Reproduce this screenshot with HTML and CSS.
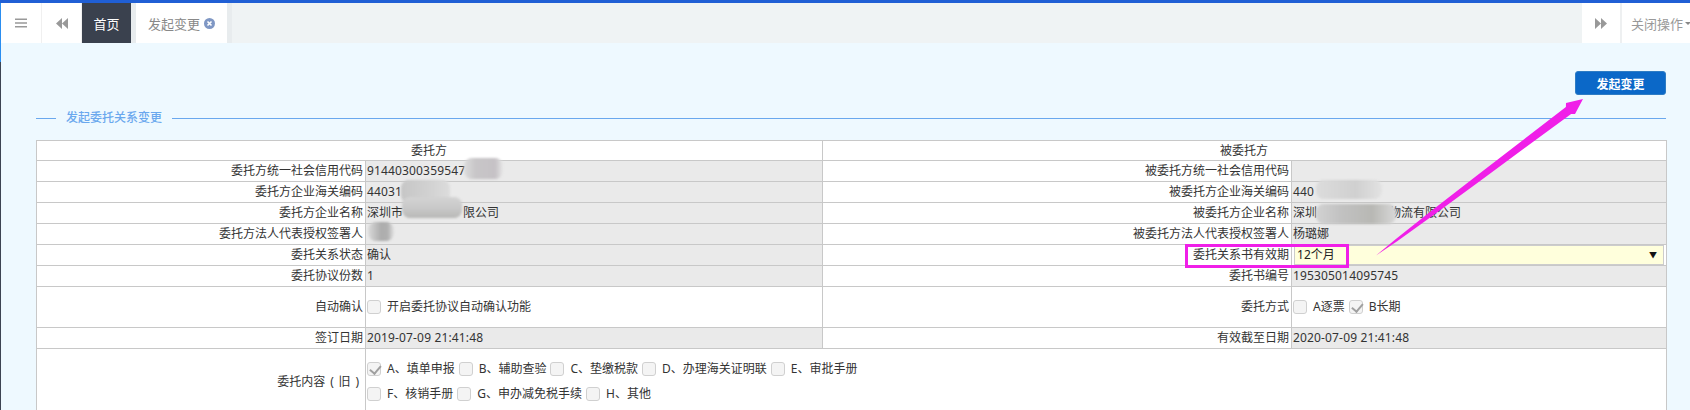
FILE: index.html
```html
<!DOCTYPE html>
<html lang="zh-CN">
<head>
<meta charset="utf-8">
<title>发起委托关系变更</title>
<link rel="stylesheet" href="styles.css">
</head>
<body>
<div class="app">
  <header class="tabs">
    <div class="tab-btn tab-menu">
      <svg width="12" height="10" viewBox="0 0 12 10"><path d="M0 0.500h12v1.600H0zM0 4.200h12v1.600H0zM0 7.900h12v1.600H0z" fill="#999"/></svg>
    </div>
    <div class="tab-btn tab-back">
      <svg width="12" height="11" viewBox="0 0 12 11"><path d="M6 0v11L0 5.500zM12 0v11L6 5.500z" fill="#999"/></svg>
    </div>
    <div class="tab tab-home">首页</div>
    <div class="tab-gap"></div>
    <div class="tab tab-cur">发起变更
      <svg class="tab-x" width="11" height="11" viewBox="0 0 11 11"><circle cx="5.500" cy="5.500" r="5.500" fill="#7f97c4"/><path d="M3.500 3.500l4 4M7.500 3.500l-4 4" stroke="#fff" stroke-width="1.600"/></svg>
    </div>
    <div class="tab-gap2"></div>
    <div class="tab-fill"></div>
    <div class="tab-btn tab-next">
      <svg width="12" height="11" viewBox="0 0 12 11"><path d="M0 0v11l6-5.500zM6 0v11l6-5.500z" fill="#999"/></svg>
    </div>
    <div class="tab-close">关闭操作<i class="caret"></i></div>
  </header>
  <main class="content">
    <div class="toolbar"><button class="btn-primary">发起变更</button></div>
    <div class="legend"><span class="legend-lead"></span><span class="legend-text">发起委托关系变更</span><span class="legend-rule"></span></div>
    <table class="grid">
      <colgroup><col class="c1"><col class="c2"><col class="c3"><col class="c4"></colgroup>
      <tr class="r-h"><th colspan="2">委托方</th><th colspan="2">被委托方</th></tr>
      <tr><td class="lb">委托方统一社会信用代码</td><td class="ro num">91440300359547</td><td class="lb">被委托方统一社会信用代码</td><td class="ro"></td></tr>
      <tr><td class="lb">委托方企业海关编码</td><td class="ro num">44031</td><td class="lb">被委托方企业海关编码</td><td class="ro num">440</td></tr>
      <tr><td class="lb">委托方企业名称</td><td class="ro">深圳市　　　　　限公司</td><td class="lb">被委托方企业名称</td><td class="ro">深圳　　　　　　物流有限公司</td></tr>
      <tr><td class="lb">委托方法人代表授权签署人</td><td class="ro"></td><td class="lb">被委托方法人代表授权签署人</td><td class="ro">杨璐娜</td></tr>
      <tr><td class="lb">委托关系状态</td><td class="ro">确认</td><td class="lb">委托关系书有效期</td><td class="sel-cell"><div class="select">12个月<span class="sel-arrow">▼</span></div></td></tr>
      <tr><td class="lb">委托协议份数</td><td class="ro num">1</td><td class="lb">委托书编号</td><td class="ro num">195305014095745</td></tr>
      <tr class="r-check"><td class="lb">自动确认</td><td><span class="opt"><i class="cb"></i>开启委托协议自动确认功能</span></td><td class="lb">委托方式</td><td><span class="opt"><i class="cb"></i>A逐票</span><span class="opt"><i class="cb on"></i>B长期</span></td></tr>
      <tr><td class="lb">签订日期</td><td class="ro num">2019-07-09 21:41:48</td><td class="lb">有效截至日期</td><td class="ro num">2020-07-09 21:41:48</td></tr>
      <tr class="r-multi"><td class="lb lb-old">委托内容 ( 旧 )</td><td colspan="3">
        <div class="opts"><span class="opt"><i class="cb on"></i>A、填单申报</span><span class="opt"><i class="cb"></i>B、辅助查验</span><span class="opt"><i class="cb"></i>C、垫缴税款</span><span class="opt"><i class="cb"></i>D、办理海关证明联</span><span class="opt"><i class="cb"></i>E、审批手册</span></div>
        <div class="opts"><span class="opt"><i class="cb"></i>F、核销手册</span><span class="opt"><i class="cb"></i>G、申办减免税手续</span><span class="opt"><i class="cb"></i>H、其他</span></div>
      </td></tr>
    </table>
  </main>
  <i class="smudge s1"></i><i class="smudge s2"></i><i class="smudge s3"></i><i class="smudge s4"></i><i class="smudge s5"></i><i class="smudge s6"></i>
  <div class="mark-box"></div>
  <svg class="mark-arrow" width="1690" height="410" viewBox="0 0 1690 410"><polygon points="1376,255.500 1395.900,238.900 1430.500,211.600 1477.600,174.900 1526.900,137 1565.900,106.900 1566,103 1583,99 1575,114 1571.100,113.900 1531.500,143 1481.400,180.100 1433.300,215.200 1397.500,240.900" fill="#f01fe8"/></svg>
</div>
</body>
</html>
```
FILE: styles.css
```css
* { box-sizing: border-box; }
html, body { margin: 0; padding: 0; }
body { width: 1690px; height: 410px; overflow: hidden; background: #eef9ff; font: 12px "Noto Sans", "Noto Sans CJK SC", sans-serif; color: #333; }
.app { position: relative; width: 1690px; height: 410px; overflow: hidden; border-top: 3px solid #205fd5; }
.app::before { content: ""; position: absolute; left: 0; top: 0; bottom: 0; width: 1px; background: linear-gradient(#2a8df0 59px, #3c4452 59px); z-index: 2; }
.tabs { display: flex; height: 40px; background: #fff; }
.tab-btn { display: flex; align-items: center; justify-content: center; width: 41px; height: 40px; border-right: 1px solid #f0f0f0; background: #fff; }
.tab-menu { width: 42px; padding-left: 1px; }
.tab-back { width: 40px; }
.tab { display: flex; align-items: center; height: 40px; font-size: 13px; }
.tab-home { width: 49px; justify-content: center; background: #3a414e; color: #fff; }
.tab-gap { width: 5px; background: #e8ecee; }
.tab-cur { width: 91px; padding-left: 12px; color: #888; background: #fff; gap: 4px; }
.tab-x { flex: none; }
.tab-gap2 { width: 5px; background: #e8ecee; }
.tab-fill { flex: 1; background: #eff3f4; }
.tab-next { width: 40px; border-left: 0; border-right: 2px solid #eef0f1; }
.tab-close { display: flex; align-items: center; width: 68px; padding-left: 9px; font-size: 13px; white-space: nowrap; color: #999; background: #fff; }
.caret { flex: none; margin-left: 2px; border: 3px solid transparent; border-top-color: #888; border-bottom: 0; }
.content { padding: 28px 24px 0 36px; }
.toolbar { display: flex; justify-content: flex-end; height: 24px; }
.btn-primary { width: 91px; height: 24px; padding: 0; border: 1px solid #2e7cc4; border-radius: 3px; background: #0b68c8; color: #fff; font: 700 12px "Noto Sans CJK SC", sans-serif; }
.legend { display: flex; align-items: center; gap: 10px; height: 14px; margin-top: 16px; color: #6aa8ee; font-weight: 500; }
.legend-lead { width: 20px; height: 1px; background: #6aa8ee; }
.legend-rule { flex: 1; height: 1px; background: #6aa8ee; }
.legend-text { width: 96px; white-space: nowrap; position: relative; top: -1px; }
.grid { width: 1630px; margin-top: 15px; table-layout: fixed; border-collapse: collapse; background: #fff; color: #333; }
.c1 { width: 329px; } .c2 { width: 457px; } .c3 { width: 469px; } .c4 { width: 375px; }
.grid th, .grid td { height: 21px; padding: 0 2px 0 1px; border: 1px solid #c8c8c8; font-weight: 400; line-height: 16px; white-space: nowrap; overflow: hidden; }
.grid th { height: 20px; text-align: center; }
.grid .lb { text-align: right; }
.grid .ro { background: #eaeaea; }
.grid .num { letter-spacing: 0.15px; }
.grid .r-check td { height: 41px; }
.grid .r-multi td { height: 66px; vertical-align: top; padding-top: 7px; }
.grid .r-multi .lb-old { vertical-align: top; padding: 25px 6px 0 1px; word-spacing: 1.7px; }
.grid .sel-cell { padding: 0 2px; }
.select { display: flex; justify-content: space-between; align-items: center; height: 20px; padding: 0 4px 0 2px; border: 1px solid #ccc; background: #ffffdc; color: #222; }
.sel-arrow { font-size: 8px; color: #111; margin-right: 2px; }
.opts { display: flex; height: 25px; align-items: center; }
.opt { display: inline-flex; align-items: center; vertical-align: middle; margin-right: 4px; }
.cb { position: relative; flex: none; width: 14px; height: 14px; margin-right: 6px; border: 1px solid #d0d0d0; border-radius: 3px; background: #f4f4f4; }
.cb.on::after { content: ""; position: absolute; left: 4px; top: 0; width: 4.500px; height: 9px; border: solid #a0a0a0; border-width: 0 2.500px 2.500px 0; transform: rotate(40deg); }
.smudge { position: absolute; border-radius: 8px; filter: blur(1px); z-index: 3; }
.s1 { left: 464px; top: 155px; width: 39px; height: 21px; background: linear-gradient(90deg, #dcdcdc, #c8c6c8 30%, #c6c2c6 80%, #e6e6e6); }
.s2 { left: 401px; top: 177px; width: 49px; height: 23px; background: linear-gradient(90deg, #c6c6c6, #d2d2d2 60%, #dcdcdc); }
.s3 { left: 402px; top: 194px; width: 60px; height: 21px; background: linear-gradient(#d4d4d4, #c8c8c8 55%, #b8b8b6); }
.s4 { left: 368px; top: 219px; width: 26px; height: 19px; background: linear-gradient(90deg, #dadada, #adadad 50%, #b0b0b0 75%, #e2e2e2); }
.s5 { left: 1316px; top: 177px; width: 66px; height: 19px; background: linear-gradient(90deg, #dcdcdc, #d0d0d0 60%, #e2e2e2); }
.s6 { left: 1316px; top: 201px; width: 80px; height: 20px; background: linear-gradient(90deg, #d2d2d2, #c2c2c2 30%, #b8b8b4 70%, #d8d8d8); }
.mark-box { position: absolute; left: 1185px; top: 241px; width: 164px; height: 24px; border: 3px solid #f01fe8; z-index: 4; }
.mark-arrow { position: absolute; left: 0; top: -3px; z-index: 5; pointer-events: none; }
```
